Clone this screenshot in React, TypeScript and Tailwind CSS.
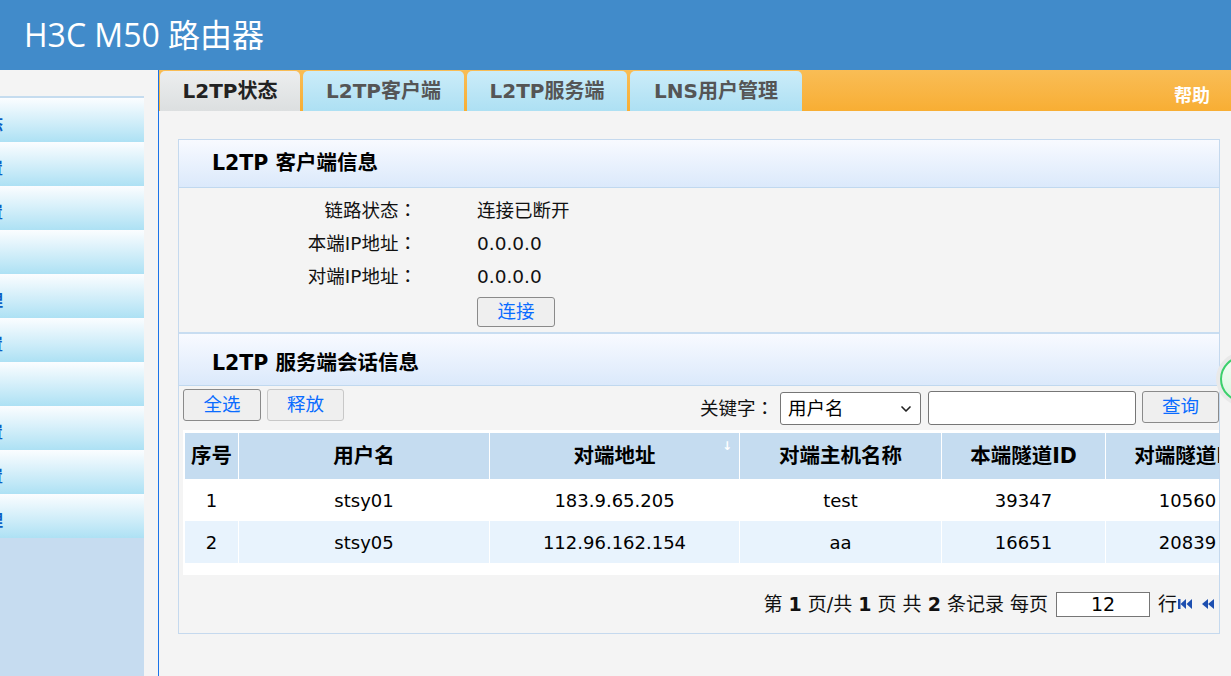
import { ChevronDown } from 'lucide-react';

const font = { fontFamily: '"DejaVu Sans", "Noto Sans CJK SC", sans-serif' };
const jp = { fontFamily: '"Noto Sans CJK JP", sans-serif' };

const menu = ['系统状态', '上网设置', '内网设置', '', '行为管理', 'VPN设置', '', '安全设置', '高级设置', '系统管理'];

const tabs = [
  { label: 'L2TP状态', w: 'w-[140px]', active: true },
  { label: 'L2TP客户端', w: 'w-[161px]', active: false },
  { label: 'L2TP服务端', w: 'w-[160px]', active: false },
  { label: 'LNS用户管理', w: 'w-[172px]', active: false },
];

const rows = [
  { no: '1', user: 'stsy01', addr: '183.9.65.205', host: 'test', local: '39347', peer: '10560' },
  { no: '2', user: 'stsy05', addr: '112.96.162.154', host: 'aa', local: '16651', peer: '20839' },
];

function Btn({ label, disabled, w }: { label: string; disabled?: boolean; w: string }) {
  return (
    <div
      className={`${w} h-[32px] flex items-center justify-center rounded-[3px] border bg-[#efefef] text-[18.5px] text-[#0a6cff] ${
        disabled ? 'border-[#c8c8c8]' : 'border-[#8a8a8a]'
      }`}
    >
      {label}
    </div>
  );
}

function FirstIcon() {
  return (
    <svg width="16" height="14" viewBox="0 0 16 14">
      <rect x="1" y="2" width="2.5" height="10" fill="#1d4fb0" />
      <polygon points="9,2 3.5,7 9,12" fill="#1d4fb0" />
      <polygon points="15,2 9.5,7 15,12" fill="#1d4fb0" />
    </svg>
  );
}

function PrevIcon() {
  return (
    <svg width="14" height="14" viewBox="0 0 14 14">
      <polygon points="7,2 1,7 7,12" fill="#1d4fb0" />
      <polygon points="13,2 7,7 13,12" fill="#1d4fb0" />
    </svg>
  );
}

export default function App() {
  return (
    <div className="relative w-[1231px] h-[676px] overflow-hidden bg-[#f4f4f4] flex flex-col" style={font}>
      {/* top banner */}
      <div className="h-[70px] shrink-0 bg-[#418bca] flex items-center pl-[24px]">
        <span className="text-white text-[32px] leading-none" style={{ fontFamily: '"Open Sans", "Noto Sans CJK SC", sans-serif' }}>
          H3C M50 路由器
        </span>
      </div>

      <div className="flex flex-1 min-h-0">
        {/* left menu */}
        <div className="w-[144px] shrink-0 flex flex-col">
          <div className="h-[26px] bg-[#f4f4f4]" />
          <div className="border-t-2 border-[#c5dcef] flex flex-col">
            {menu.map((m, i) => (
              <div key={i} className="h-[44px] bg-linear-to-b from-[#fbfdff] to-[#ade1f4] flex items-center pt-[10px]">
                <div className="w-[3px] flex justify-end whitespace-nowrap text-[16px] font-bold text-[#0a5fc4]">{m}</div>
              </div>
            ))}
          </div>
          <div className="flex-1 bg-[#c6dcf0]" />
        </div>
        <div className="w-[14px] shrink-0 bg-[#f4f4f4]" />
        <div className="w-px shrink-0 bg-[#1a73e8]" />

        {/* main */}
        <div className="flex-1 flex flex-col min-w-0">
          <div className="h-[41px] shrink-0 bg-linear-to-b from-[#f9bd55] to-[#f8ae33] flex pl-px pt-px gap-[3px]">
            {tabs.map((t) => (
              <div
                key={t.label}
                className={`${t.w} h-full rounded-t-[5px] flex items-center justify-center text-[20px] font-bold ${
                  t.active
                    ? 'bg-linear-to-b from-[#eceeef] to-[#dcdfe0] text-[#222]'
                    : 'bg-linear-to-b from-[#cbecf9] to-[#ade0f3] text-[#555]'
                }`}
              >
                {t.label}
              </div>
            ))}
            <div className="flex-1 flex items-end justify-end pr-[21px] pb-[2px]">
              <span className="text-white text-[18px] font-bold">帮助</span>
            </div>
          </div>

          <div className="flex-1 pl-[19px] pr-[11px] pt-[28px]">
            <div className="border border-[#c5d9ee] flex flex-col">
              {/* client info */}
              <div className="h-[48px] bg-linear-to-b from-[#f8faff] to-[#dbe9fb] border-b border-[#c0d8ef] flex items-center pl-[33px]">
                <span className="text-[20.5px] font-bold text-black">L2TP 客户端信息</span>
              </div>
              <div className="pt-[6px] pb-[5px] flex flex-col text-[18.5px] text-[#111]">
                {[
                  ['链路状态', '连接已断开'],
                  ['本端IP地址', '0.0.0.0'],
                  ['对端IP地址', '0.0.0.0'],
                ].map(([k, v]) => (
                  <div key={k} className="h-[33px] flex items-center">
                    <div className="w-[238px] text-right">
                      {k}
                      <span style={jp}>：</span>
                    </div>
                    <div className="ml-[60px]">{v}</div>
                  </div>
                ))}
                <div className="ml-[298px] mt-[4px]">
                  <div className="w-[78px] h-[30px] flex items-center justify-center rounded-[3px] border border-[#8a8a8a] bg-[#efefef] text-[#0a6cff]">
                    连接
                  </div>
                </div>
              </div>

              {/* session info */}
              <div className="h-[54px] border-t-2 border-[#c8ddf1] bg-linear-to-b from-[#f8faff] to-[#dbe9fb] border-b border-b-[#c0d8ef] flex items-center pl-[33px] pt-[8px]">
                <span className="text-[20.5px] font-bold text-black">L2TP 服务端会话信息</span>
              </div>
              <div className="h-[44px] flex items-start pt-[3px] pl-[4px]">
                <Btn label="全选" w="w-[78px]" />
                <div className="ml-[6px]">
                  <Btn label="释放" w="w-[77px]" disabled />
                </div>
                <div className="ml-auto flex items-center gap-0 text-[18.5px]">
                  <span className="text-[#111] mr-[6px] mt-[2px]">
                    关键字<span style={jp}>：</span>
                  </span>
                  <div className="w-[141px] h-[33px] mt-[3px] rounded-[3px] border border-[#767676] bg-white flex items-center justify-between pl-[7px] pr-[6px] text-black">
                    <span>用户名</span>
                    <ChevronDown size={16} strokeWidth={2.5} className="text-[#222]" />
                  </div>
                  <div className="w-[208px] h-[34px] ml-[7px] mt-[1px] rounded-[3px] border border-[#767676] bg-white" />
                  <div className="ml-[6px] -mt-[1px]">
                    <Btn label="查询" w="w-[77px]" />
                  </div>
                </div>
              </div>

              {/* table */}
              <div className="ml-[4px] h-[145px] bg-white pl-[2px] pt-[3px] overflow-hidden">
                <div className="grid grid-cols-[53px_250px_249px_201px_163px_163px] gap-x-px w-max">
                  {['序号', '用户名', '对端地址', '对端主机名称', '本端隧道ID', '对端隧道ID'].map((h) => (
                    <div key={h} className="relative h-[46px] bg-[#c5dcf0] flex items-center justify-center text-[20.5px] font-bold text-black whitespace-nowrap">
                      {h}
                      {h === '对端地址' && (
                        <span className="absolute right-[7px] top-[4px] text-[12px] font-bold text-white">↓</span>
                      )}
                    </div>
                  ))}
                  {rows.map((r, i) =>
                    [r.no, r.user, r.addr, r.host, r.local, r.peer].map((c, j) => (
                      <div
                        key={`${i}-${j}`}
                        className={`h-[42px] flex items-center justify-center text-[18px] text-black ${
                          i === 1 ? 'bg-[#e8f3fd]' : 'bg-white'
                        }`}
                      >
                        {c}
                      </div>
                    ))
                  )}
                </div>
              </div>

              {/* pager */}
              <div className="h-[58px] flex items-center justify-end pr-[4px] text-[19px] text-[#111]">
                <span className="whitespace-nowrap">
                  第 <b>1</b> 页/共 <b>1</b> 页 共 <b>2</b> 条记录 每页
                </span>
                <div className="ml-[8px] w-[94px] h-[25px] border border-[#767676] bg-white flex items-center justify-center text-black">
                  12
                </div>
                <span className="ml-[8px]">行</span>
                <div className="flex items-center gap-[8px]">
                  <FirstIcon />
                  <PrevIcon />
                </div>
              </div>
            </div>
          </div>
        </div>
      </div>

      {/* floating helper bubble at right edge */}
      <div className="absolute left-[1216px] top-[352px] w-[54px] h-[54px] rounded-full bg-[#e9e9e9] flex items-center justify-center">
        <div className="w-[46px] h-[46px] rounded-full border-2 border-[#3cd06c] bg-linear-to-b from-[#f4fff6] to-[#d9f6e0]" />
      </div>
    </div>
  );
}
